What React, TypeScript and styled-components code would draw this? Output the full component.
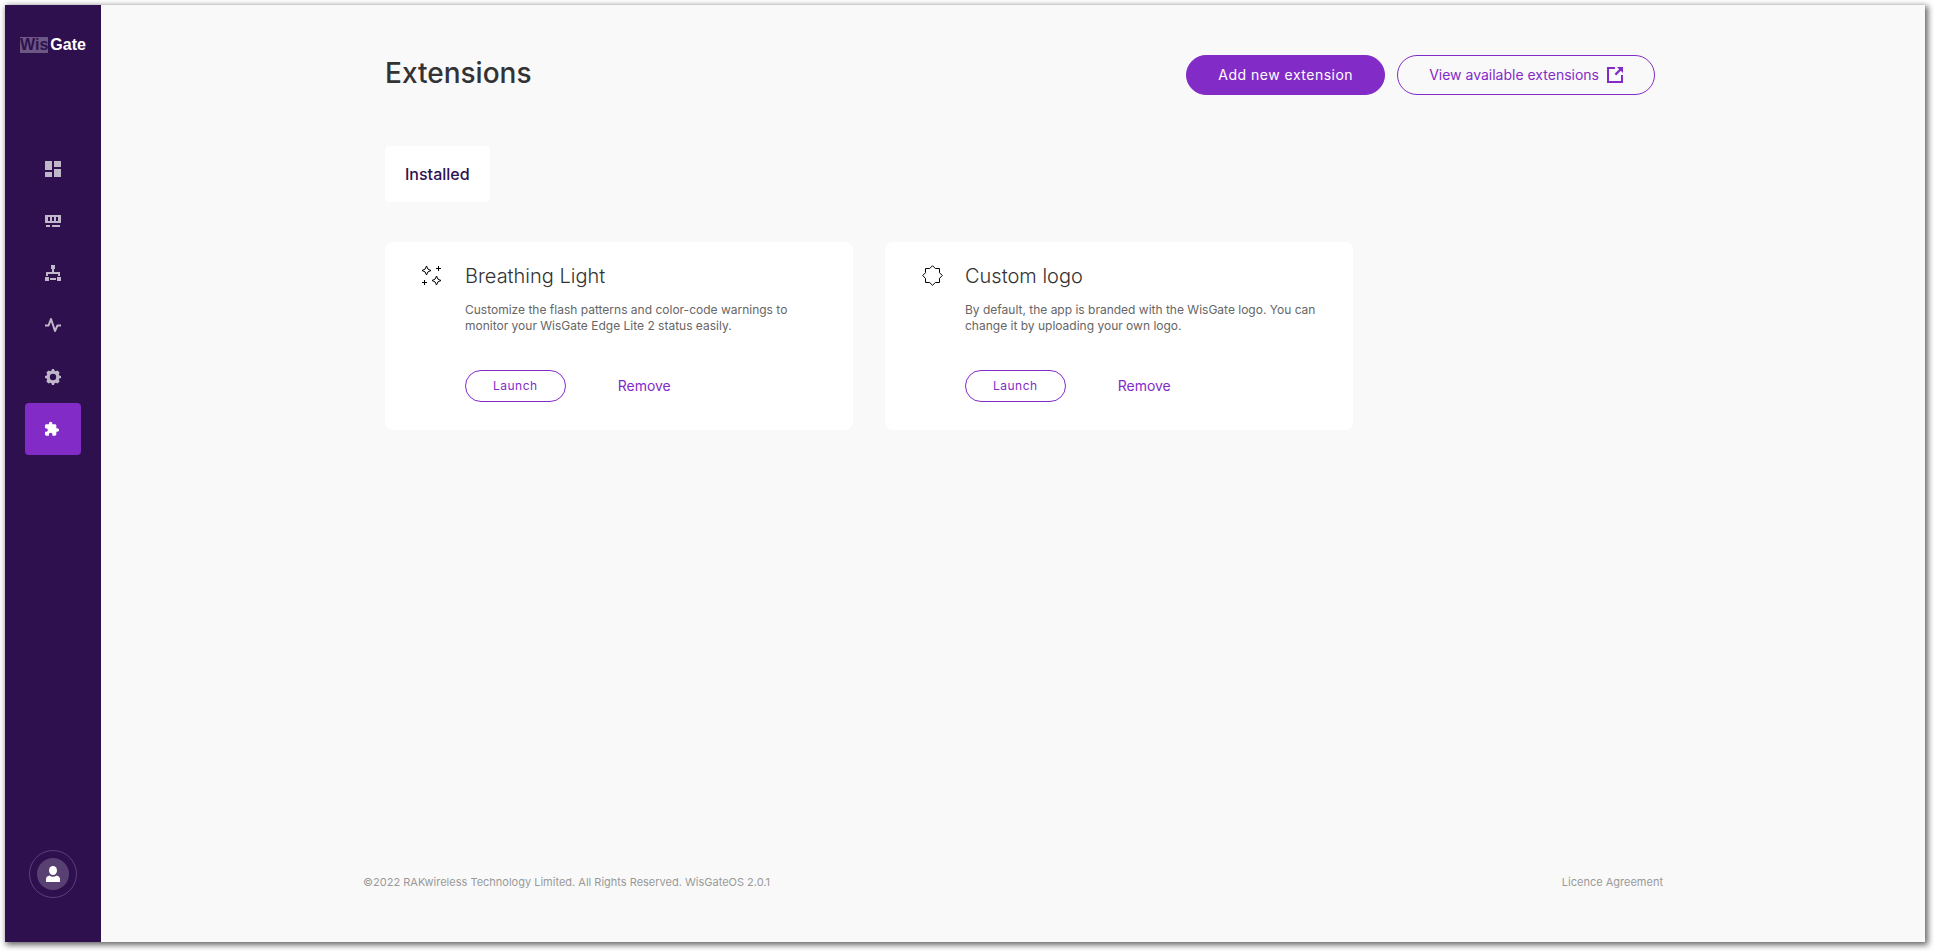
import React from "react";
import styled, { createGlobalStyle } from "styled-components";

const color = {
  sidebar: "#2f104f",
  primary: "#832bc7",
  canvas: "#f9f9f9",
  text: "#333333",
};

const GlobalStyle = createGlobalStyle`
  * { box-sizing: border-box; }
  body {
    margin: 0;
    background: #ffffff;
    color: ${color.text};
    font-family: Inter, "Liberation Sans", sans-serif;
  }
  button, a { font-family: inherit; }
`;

const Page = styled.div`
  min-height: 100vh;
  display: flex;
  padding: 5px 9px 9px 5px;
`;

const Frame = styled.div`
  flex: 1;
  display: flex;
  background: ${color.canvas};
  box-shadow: 2px 2px 6px 1px rgba(0, 0, 0, 0.6);
`;

const Sidebar = styled.aside`
  flex: none;
  width: 96px;
  display: flex;
  flex-direction: column;
  align-items: center;
  padding: 32px 0 44px;
  background: ${color.sidebar};
`;

const Logo = styled.a`
  display: flex;
  align-items: center;
  gap: 2px;
  height: 16px;
  font: bold 16px/16px "Liberation Sans", Arial, sans-serif;
  color: #ffffff;
  text-decoration: none;
`;

const LogoBox = styled.span`
  background: #6d5784;
  color: ${color.sidebar};
`;

const Nav = styled.nav`
  flex: 1;
  display: flex;
  flex-direction: column;
  margin-top: 90px;
`;

const NavItem = styled.a<{ $active?: boolean }>`
  display: flex;
  align-items: center;
  justify-content: center;
  width: 56px;
  height: 52px;
  border-radius: 4px;
  background: ${(p) => (p.$active ? color.primary : "transparent")};
  color: ${(p) => (p.$active ? "#ffffff" : "#c1b7ca")};
`;

const Account = styled.button`
  display: flex;
  align-items: center;
  justify-content: center;
  width: 48px;
  height: 48px;
  padding: 0;
  border: 1px solid #59407a;
  border-radius: 50%;
  background: none;
`;

const Avatar = styled.span`
  display: flex;
  align-items: center;
  justify-content: center;
  width: 32px;
  height: 32px;
  border-radius: 50%;
  background: #594072;
  color: #ffffff;
`;

const Content = styled.div`
  flex: 1;
  display: flex;
  flex-direction: column;
  width: 100%;
  max-width: 1300px;
  margin: 0 auto;
`;

const Main = styled.main`
  flex: 1;
  padding: 50px 8px 0 22px;
`;

const Header = styled.header`
  display: flex;
  justify-content: space-between;
  align-items: flex-start;
  margin-bottom: 51px;
`;

const Title = styled.h1`
  margin: 0;
  font-size: 28px;
  font-weight: 500;
  line-height: 36px;
`;

const Actions = styled.div`
  display: flex;
  gap: 12px;
`;

const Button = styled.button<{ $filled?: boolean; $small?: boolean }>`
  display: flex;
  align-items: center;
  justify-content: center;
  gap: 8px;
  height: ${(p) => (p.$small ? 32 : 40)}px;
  padding: 0 ${(p) => (p.$small ? 27 : 31)}px;
  border: 1px solid ${color.primary};
  border-radius: 20px;
  background: ${(p) => (p.$filled ? color.primary : "transparent")};
  color: ${(p) => (p.$filled ? "#ffffff" : color.primary)};
  font-size: ${(p) => (p.$small ? 12 : 14)}px;
  font-weight: 400;
  line-height: 16px;
  letter-spacing: ${(p) => (p.$filled || p.$small ? "0.5px" : "normal")};
  white-space: nowrap;
`;

const Tabs = styled.div`
  display: flex;
  margin-bottom: 40px;
`;

const Tab = styled.button`
  height: 56px;
  padding: 0 20px;
  border: 0;
  border-radius: 4px;
  background: #ffffff;
  color: ${color.sidebar};
  font-size: 16px;
  font-weight: 500;
`;

const Cards = styled.div`
  display: flex;
  flex-wrap: wrap;
  gap: 32px;
`;

const Card = styled.article`
  display: flex;
  gap: 22px;
  width: 468px;
  padding: 23px 28px 28px 36px;
  border-radius: 8px;
  background: #ffffff;
`;

const CardIcon = styled.div`
  flex: none;
  width: 22px;
  height: 22px;
  color: #000000;
`;

const CardBody = styled.div`
  flex: 1;
`;

const CardTitle = styled.h2`
  margin: 0 0 15px;
  font-size: 20px;
  font-weight: 300;
  line-height: 22px;
`;

const Description = styled.p`
  margin: 0 0 36px;
  font-size: 12px;
  line-height: 16px;
  color: #666666;
`;

const CardActions = styled.div`
  display: flex;
  align-items: center;
  gap: 52px;
`;

const TextButton = styled.button`
  padding: 0;
  border: 0;
  background: none;
  color: ${color.primary};
  font-size: 14px;
  line-height: 16px;
`;

const Footer = styled.footer`
  display: flex;
  justify-content: space-between;
  padding-bottom: 52px;
  font-size: 11px;
  line-height: 16px;
  color: #999999;
`;

const FooterLink = styled.a`
  color: inherit;
  text-decoration: none;
`;

const Icon = styled.svg`
  display: block;
  flex: none;
  fill: currentColor;
`;

const LineIcon = styled.svg`
  display: block;
  flex: none;
  fill: none;
  stroke: currentColor;
`;

const DashboardIcon = () => (
  <Icon width="16" height="16" viewBox="0 0 16 16">
    <path d="M0 0h7v9H0zM9 0h7v6H9zM0 11h7v5H0zM9 8h7v8H9z" />
  </Icon>
);

const GatewayIcon = () => (
  <Icon width="16" height="16" viewBox="0 0 16 16" fillRule="evenodd">
    <path d="M0 2h16v8H0zM3 4v4h2V4zM7 4v4h2V4zM11 4v4h2V4zM1 12h4v2H1zM7 12h8v2H7z" />
  </Icon>
);

const NetworkIcon = () => (
  <Icon width="16" height="16" viewBox="0 0 16 16">
    <path d="M6 0h4v4H9v3h6v4h-2V9H3v2H1V7h6V4H6zM0 12h4v4H0zM12 12h4v4h-4zM5 13h6v2H5z" />
  </Icon>
);

const ActivityIcon = () => (
  <LineIcon width="16" height="16" viewBox="0 0 16 16" strokeWidth="2" strokeLinejoin="round">
    <path d="M0 8.400h3.600L6 2l4 12 2.500-5.600H16" />
  </LineIcon>
);

const GearIcon = () => (
  <Icon width="16" height="16" viewBox="0 0 16 16" fillRule="evenodd">
    <path d="M7 0h2l.6 1.700 1.200.5 1.700-.8 2.100 2.100-.8 1.700.5 1.200L16 7v2l-1.700.6-.5 1.200.8 1.700-2.100 2.100-1.700-.8-1.200.5L9 16H7l-.6-1.700-1.200-.5-1.700.8-2.100-2.100.8-1.700-.5-1.200L0 9V7l1.700-.6.5-1.200-.8-1.700 2.100-2.100 1.700.8 1.200-.5zM8 4.800a3.200 3.200 0 1 0 0 6.400 3.200 3.200 0 0 0 0-6.400z" />
  </Icon>
);

const ExtensionIcon = () => (
  <Icon width="16" height="16" viewBox="2 0 24 24">
    <path d="M20.5 11H19V7c0-1.100-.9-2-2-2h-4V3.500C13 2.120 11.880 1 10.500 1S8 2.120 8 3.500V5H4c-1.100 0-1.990.9-1.990 2v3.800H3.500c1.490 0 2.700 1.210 2.700 2.700s-1.210 2.700-2.700 2.700H2V20c0 1.100.9 2 2 2h3.800v-1.500c0-1.490 1.210-2.700 2.700-2.700 1.490 0 2.700 1.210 2.700 2.700V22H17c1.100 0 2-.9 2-2v-4h1.500c1.380 0 2.500-1.120 2.500-2.500S21.880 11 20.500 11z" />
  </Icon>
);

const UserIcon = () => (
  <Icon width="16" height="16" viewBox="0 0 16 16">
    <ellipse cx="8" cy="4.500" rx="4" ry="4.500" />
    <path d="M1 16v-2.500C1 11 2.500 9.800 4.500 9.500 6.500 11.200 9.500 11.200 11.500 9.500 13.500 9.800 15 11 15 13.500V16z" />
  </Icon>
);

const OpenIcon = () => (
  <Icon width="16" height="16" viewBox="0 0 16 16">
    <path d="M0 0h8v2H2v12h12V8h2v8H0zM10 0h6v6l-2.200-2.200-4.600 4.600-1.600-1.600 4.600-4.600z" />
  </Icon>
);

const SparklesIcon = () => (
  <LineIcon width="22" height="22" viewBox="0 0 22 22">
    <path d="M5.500 1L6.900 4.100 10 5.500 6.900 6.900 5.500 10 4.100 6.900 1 5.500 4.100 4.100z" />
    <path d="M15.500 11L16.900 14.100 20 15.500 16.900 16.900 15.500 20 14.100 16.900 11 15.500 14.100 14.100z" />
    <path d="M17.500 1v5M15 3.500h5M3.500 15v5M1 17.500h5" />
  </LineIcon>
);

const BadgeIcon = () => (
  <LineIcon width="22" height="22" viewBox="0 0 22 22">
    <path d="M11.500.7l2.800 2.800h4.200v4.200l2.800 2.800-2.800 2.800v4.200h-4.200l-2.800 2.800-2.800-2.800H4.500v-4.200L1.700 10.500l2.800-2.800V3.500h4.200z" />
  </LineIcon>
);

const navItems = [
  { label: "Dashboard", icon: <DashboardIcon /> },
  { label: "Gateway", icon: <GatewayIcon /> },
  { label: "Network", icon: <NetworkIcon /> },
  { label: "Diagnostics", icon: <ActivityIcon /> },
  { label: "Settings", icon: <GearIcon /> },
  { label: "Extensions", icon: <ExtensionIcon />, active: true },
];

const extensions = [
  {
    name: "Breathing Light",
    description:
      "Customize the flash patterns and color-code warnings to monitor your WisGate Edge Lite 2 status easily.",
    icon: <SparklesIcon />,
  },
  {
    name: "Custom logo",
    description:
      "By default, the app is branded with the WisGate logo. You can change it by uploading your own logo.",
    icon: <BadgeIcon />,
  },
];

export default function App() {
  return (
    <>
      <GlobalStyle />
      <Page>
        <Frame>
          <Sidebar>
            <Logo href="#">
              <LogoBox>Wis</LogoBox>
              <span>Gate</span>
            </Logo>
            <Nav>
              {navItems.map((item) => (
                <NavItem key={item.label} href="#" aria-label={item.label} $active={item.active}>
                  {item.icon}
                </NavItem>
              ))}
            </Nav>
            <Account aria-label="Account">
              <Avatar>
                <UserIcon />
              </Avatar>
            </Account>
          </Sidebar>
          <Content>
            <Main>
              <Header>
                <Title>Extensions</Title>
                <Actions>
                  <Button $filled>Add new extension</Button>
                  <Button>
                    View available extensions
                    <OpenIcon />
                  </Button>
                </Actions>
              </Header>
              <Tabs role="tablist">
                <Tab role="tab" aria-selected="true">
                  Installed
                </Tab>
              </Tabs>
              <Cards>
                {extensions.map((ext) => (
                  <Card key={ext.name}>
                    <CardIcon>{ext.icon}</CardIcon>
                    <CardBody>
                      <CardTitle>{ext.name}</CardTitle>
                      <Description>{ext.description}</Description>
                      <CardActions>
                        <Button $small>Launch</Button>
                        <TextButton>Remove</TextButton>
                      </CardActions>
                    </CardBody>
                  </Card>
                ))}
              </Cards>
            </Main>
            <Footer>
              <span>©2022 RAKwireless Technology Limited. All Rights Reserved. WisGateOS 2.0.1</span>
              <FooterLink href="#">Licence Agreement</FooterLink>
            </Footer>
          </Content>
        </Frame>
      </Page>
    </>
  );
}
